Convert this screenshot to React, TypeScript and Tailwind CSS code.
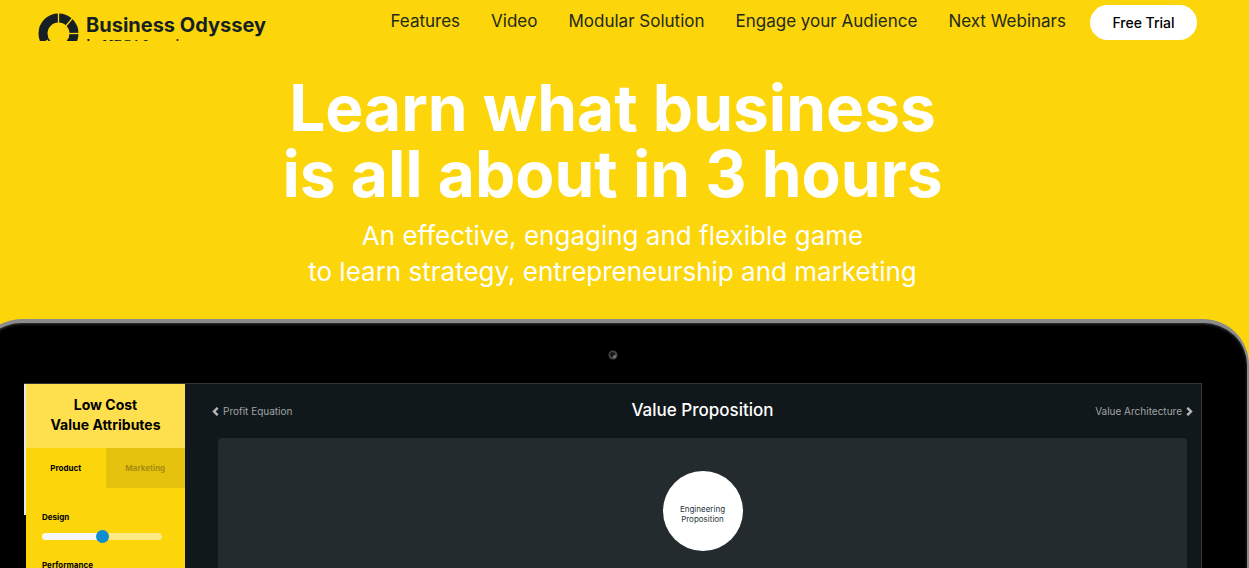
import React, { useState } from "react";

const NAV_LINKS = [
  "Features",
  "Video",
  "Modular Solution",
  "Engage your Audience",
  "Next Webinars",
];

const TABS = ["Product", "Marketing"];

function Logo() {
  return (
    <a href="#" className="flex h-[41px] items-start overflow-hidden text-[#151f24]">
      <svg width="41" height="41" viewBox="0 0 41 41" className="mt-[13px] shrink-0" aria-hidden="true">
        <circle cx="20.5" cy="20.5" r="15.5" fill="none" stroke="currentColor" strokeWidth="9" />
        <g stroke="#fcd50a" strokeWidth="1.3">
          <path d="M20.5 0v10" />
          <path d="M27.5 13.5l8-9.5" />
          <path d="M31 20.5h10" />
          <path d="M10 27l-6 4" />
        </g>
      </svg>
      <span className="ml-[7px] mt-[13px] block whitespace-nowrap">
        <span className="block text-xl leading-6 font-bold">Business Odyssey</span>
        <span className="block font-[family-name:'Liberation_Serif',serif] text-[13px] leading-[14px] font-bold italic">
          by MEGA Learning
        </span>
      </span>
    </a>
  );
}

function Header() {
  return (
    <header className="flex items-start justify-between pr-[52px] pl-[38px]">
      <Logo />
      <div className="flex items-start gap-6">
        <nav className="flex gap-[31px] pt-[9px] text-[17px] leading-6 text-[#222a1c]">
          {NAV_LINKS.map((label) => (
            <a key={label} href="#" className="whitespace-nowrap">
              {label}
            </a>
          ))}
        </nav>
        <button
          type="button"
          className="mt-[5px] h-[35px] w-[107px] rounded-full bg-white text-sm font-medium whitespace-nowrap text-black"
        >
          Free Trial
        </button>
      </div>
    </header>
  );
}

interface AttributeSliderProps {
  id: string;
  label: string;
}

function AttributeSlider({ id, label }: AttributeSliderProps) {
  const [value, setValue] = useState(50);

  return (
    <div className="h-12">
      <label htmlFor={id} className="block text-[8px] leading-[10px] font-bold text-black">
        {label}
      </label>
      <input
        id={id}
        type="range"
        value={value}
        onChange={(e) => setValue(Number(e.target.value))}
        style={{
          backgroundImage: `linear-gradient(to right, #f7f7f7 ${value}%, #fdea84 ${value}%)`,
        }}
        className="mt-[11px] block h-[7px] w-full appearance-none rounded-full [&::-webkit-slider-thumb]:size-[13px] [&::-webkit-slider-thumb]:appearance-none [&::-webkit-slider-thumb]:rounded-full [&::-webkit-slider-thumb]:bg-[#0d8cd0]"
      />
    </div>
  );
}

function Sidebar() {
  const [tab, setTab] = useState("Product");

  return (
    <aside className="w-[159px] shrink-0 bg-[#fcd50a]">
      <h2 className="bg-[#fee04f] pt-[11px] pb-[13px] text-center text-sm leading-5 font-bold text-black">
        Low Cost
        <br />
        Value Attributes
      </h2>
      <div className="grid h-10 grid-cols-2">
        {TABS.map((name) => (
          <button
            key={name}
            type="button"
            onClick={() => setTab(name)}
            className={`text-[8px] font-bold ${tab === name ? "text-black" : "bg-[#e5c20d] text-[#a98d10]"}`}
          >
            {name}
          </button>
        ))}
      </div>
      <div className="pt-6 pr-[23px] pl-4">
        <AttributeSlider id="design" label="Design" />
        <AttributeSlider id="performance" label="Performance" />
      </div>
    </aside>
  );
}

function Chevron({ flipped = false }: { flipped?: boolean }) {
  return (
    <svg width="7" height="9" viewBox="0 0 7 9" className={flipped ? "rotate-180" : ""} aria-hidden="true">
      <path d="M1.3 0.8L5 4.5 1.3 8.2" fill="none" stroke="#b4b7b8" strokeWidth="2.4" />
    </svg>
  );
}

function Board() {
  return (
    <section className="flex min-w-0 grow flex-col bg-[#10181b] pr-[14px] pl-[33px]">
      <div className="-mx-1.5 grid h-[54px] grid-cols-3 items-center text-[10px] text-[#a0a3a4]">
        <a href="#" className="flex items-center gap-1">
          <Chevron flipped />
          Profit Equation
        </a>
        <h2 className="text-center text-[17px] font-medium text-white">Value Proposition</h2>
        <a href="#" className="flex items-center justify-end gap-1">
          Value Architecture
          <Chevron />
        </a>
      </div>
      <div className="flex grow justify-center rounded-t-sm bg-[#242b2e] pt-[33px]">
        <div className="flex size-20 items-center justify-center rounded-full bg-white pt-1.5 text-center text-[8px] leading-[10px] text-[#26343a]">
          Engineering
          <br />
          Proposition
        </div>
      </div>
    </section>
  );
}

function Tablet() {
  return (
    <div className="-mx-6 flex grow flex-col rounded-t-[46px] border-x-2 border-t-4 border-[#8b8b8b] bg-black pr-[45px] pl-[46px] shadow-[inset_0_1px_3px_#3a3a3a]">
      <div className="flex h-[60px] items-center justify-center pt-1">
        <svg width="10" height="10" viewBox="0 0 10 10" aria-hidden="true">
          <circle cx="5" cy="5" r="4.5" fill="#444648" />
          <circle cx="4.5" cy="4.5" r="2.5" fill="#15191c" />
          <circle cx="6.5" cy="6.5" r="1.5" fill="#777" />
        </svg>
      </div>
      <div className="flex grow border-t border-r border-[#30383a]">
        <div className="h-[131px] w-0.5 bg-[#e8e8e8]" />
        <Sidebar />
        <Board />
      </div>
    </div>
  );
}

export default function App() {
  return (
    <div className="flex h-screen flex-col overflow-hidden bg-[#fcd50a] font-[Inter,sans-serif]">
      <Header />
      <main className="flex grow flex-col pt-[34px] pr-6">
        <div className="text-center text-white">
          <h1 className="text-[64px] leading-[66px] font-bold">
            Learn what business
            <br />
            is all about in 3 hours
          </h1>
          <p className="mt-[11px] mb-[29px] text-[26px] leading-9">
            An effective, engaging and flexible game
            <br />
            to learn strategy, entrepreneurship and marketing
          </p>
        </div>
        <Tablet />
      </main>
    </div>
  );
}
